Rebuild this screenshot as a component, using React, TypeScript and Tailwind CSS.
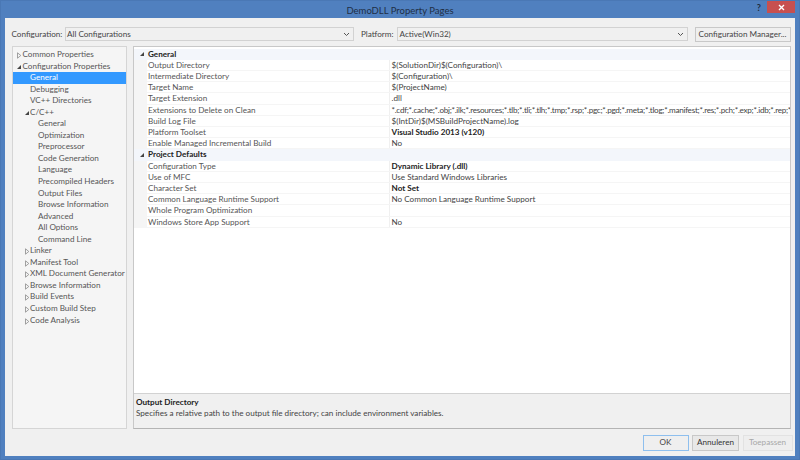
import React from "react";

function Arrow({ open }: { open: boolean }) {
  return open ? (
    <svg width="6" height="6" viewBox="0 0 6 6" className="shrink-0">
      <path d="M5 1 L5 5 L1 5 Z" fill="#444" />
    </svg>
  ) : (
    <svg width="6" height="7" viewBox="0 0 6 7" className="shrink-0">
      <path d="M1.5 0.8 L4.8 3.5 L1.5 6.2 Z" fill="none" stroke="#8a8a8a" strokeWidth="0.8" />
    </svg>
  );
}

type TreeItem = { label: string; level: number; arrow?: "open" | "closed"; selected?: boolean };

const tree: TreeItem[] = [
  { label: "Common Properties", level: 0, arrow: "closed" },
  { label: "Configuration Properties", level: 0, arrow: "open" },
  { label: "General", level: 1, selected: true },
  { label: "Debugging", level: 1 },
  { label: "VC++ Directories", level: 1 },
  { label: "C/C++", level: 1, arrow: "open" },
  { label: "General", level: 2 },
  { label: "Optimization", level: 2 },
  { label: "Preprocessor", level: 2 },
  { label: "Code Generation", level: 2 },
  { label: "Language", level: 2 },
  { label: "Precompiled Headers", level: 2 },
  { label: "Output Files", level: 2 },
  { label: "Browse Information", level: 2 },
  { label: "Advanced", level: 2 },
  { label: "All Options", level: 2 },
  { label: "Command Line", level: 2 },
  { label: "Linker", level: 1, arrow: "closed" },
  { label: "Manifest Tool", level: 1, arrow: "closed" },
  { label: "XML Document Generator", level: 1, arrow: "closed" },
  { label: "Browse Information", level: 1, arrow: "closed" },
  { label: "Build Events", level: 1, arrow: "closed" },
  { label: "Custom Build Step", level: 1, arrow: "closed" },
  { label: "Code Analysis", level: 1, arrow: "closed" },
];

type Row = { name: string; value?: string; bold?: boolean; header?: boolean; tight?: boolean };

const rows: Row[] = [
  { name: "General", header: true },
  { name: "Output Directory", value: "$(SolutionDir)$(Configuration)\\" },
  { name: "Intermediate Directory", value: "$(Configuration)\\" },
  { name: "Target Name", value: "$(ProjectName)" },
  { name: "Target Extension", value: ".dll" },
  {
    name: "Extensions to Delete on Clean",
    tight: true,
    value:
      "*.cdf;*.cache;*.obj;*.ilk;*.resources;*.tlb;*.tli;*.tlh;*.tmp;*.rsp;*.pgc;*.pgd;*.meta;*.tlog;*.manifest;*.res;*.pch;*.exp;*.idb;*.rep;*.xdc;*.pdb",
  },
  { name: "Build Log File", value: "$(IntDir)$(MSBuildProjectName).log" },
  { name: "Platform Toolset", value: "Visual Studio 2013 (v120)", bold: true },
  { name: "Enable Managed Incremental Build", value: "No" },
  { name: "Project Defaults", header: true },
  { name: "Configuration Type", value: "Dynamic Library (.dll)", bold: true },
  { name: "Use of MFC", value: "Use Standard Windows Libraries" },
  { name: "Character Set", value: "Not Set", bold: true },
  { name: "Common Language Runtime Support", value: "No Common Language Runtime Support" },
  { name: "Whole Program Optimization", value: "" },
  { name: "Windows Store App Support", value: "No" },
];

function Chevron() {
  return (
    <svg width="7" height="5" viewBox="0 0 7 5" className="shrink-0">
      <path d="M1 1 L3.5 3.5 L6 1" fill="none" stroke="#555" strokeWidth="1" />
    </svg>
  );
}

function Select({ text, className }: { text: string; className: string }) {
  return (
    <div className={`flex h-[14px] items-center justify-between border border-[#d2d2d2] bg-[#f0f0f0] pl-[1.5px] pr-[3px] text-[#444] ${className}`}>
      <span>{text}</span>
      <Chevron />
    </div>
  );
}

export default function App() {
  return (
    <div className="flex h-[460px] w-[800px] flex-col overflow-hidden border border-[#4a78b5] bg-[#5080bf] text-[8.15px] leading-[11px] text-[#444] [font-family:'Lato','Noto_Sans',sans-serif]">
      <div className="relative flex h-[17px] shrink-0 items-center justify-center text-[9.5px] text-[#1f2f45]">
        <span className="pt-[1px]">DemoDLL Property Pages</span>
        <div className="absolute right-[38px] top-[1px] text-[9px] font-bold text-[#1b2b40]">?</div>
        <div className="absolute right-[4px] top-0 flex h-[12px] w-[28px] items-center justify-center bg-[#c75050]">
          <svg width="7" height="7" viewBox="0 0 7 7">
            <path d="M1 1 L6 6 M6 1 L1 6" stroke="#fff" strokeWidth="1.4" />
          </svg>
        </div>
      </div>

      <div className="mb-[3.5px] ml-[3.5px] mr-[4.5px] flex min-h-0 flex-1 flex-col bg-[#f0f0f0] pl-[7px] pr-[4px]">
        <div className="flex h-[28px] shrink-0 items-center pt-[4px]">
          <span className="w-[53px] shrink-0 whitespace-nowrap">Configuration:</span>
          <Select text="All Configurations" className="w-[289.5px]" />
          <span className="ml-[7px] w-[36px] shrink-0 whitespace-nowrap">Platform:</span>
          <Select text="Active(Win32)" className="w-[290.5px]" />
          <div className="ml-[7px] flex h-[15px] w-[96px] items-center justify-center whitespace-nowrap border border-[#c8c8c8] bg-[#efefef]">
            Configuration Manager...
          </div>
        </div>

        <div className="flex h-[383px] shrink-0 gap-[6px]">
          <div className="w-[115.5px] shrink-0 border border-[#d5d5d5] bg-[#f5f5f5] pt-[2px] text-[#555]">
            {tree.map((t, i) => (
              <div
                key={i}
                className={`relative h-[11.56px] whitespace-nowrap leading-[11.56px] ${t.selected ? "bg-[#3399ff] text-white" : ""} ${
                  t.level === 0 ? "pl-[10px]" : t.level === 1 ? "pl-[17.5px]" : "pl-[25.5px]"
                }`}
              >
                {t.arrow && (
                  <span className={`absolute top-[3px] ${t.level === 0 ? "left-[3px]" : "left-[11px]"}`}>
                    <Arrow open={t.arrow === "open"} />
                  </span>
                )}
                {t.label}
              </div>
            ))}
          </div>

          <div className="flex min-w-0 flex-1 flex-col border border-[#c8c8c8] border-b-[#b4b4b4] bg-white">
            <div className="min-h-0 flex-1 overflow-hidden pt-[1.7px]">
              {rows.map((r, i) =>
                r.header ? (
                  <div key={i} className="flex h-[11.2px] items-center bg-[#f3f6fb] leading-[11.2px]">
                    <span className="flex w-[13px] shrink-0 justify-center pl-[2px]">
                      <Arrow open />
                    </span>
                    <span className="pl-[1px] font-bold text-[#222]">{r.name}</span>
                  </div>
                ) : (
                  <div key={i} className="flex h-[11.2px] bg-[#f5f5f5] leading-[11.2px]">
                    <div className="ml-[13px] flex min-w-0 flex-1 border-b border-[#f5f5f5] bg-white">
                      <span className="w-[243px] shrink-0 whitespace-nowrap border-r border-[#f0f0f0] pl-[1px] text-[#555]">{r.name}</span>
                      <span className={`min-w-0 flex-1 overflow-hidden whitespace-nowrap pl-[1.5px] ${r.bold ? "font-bold text-[#222]" : "text-[#444]"} ${r.tight ? "tracking-[-0.27px]" : ""}`}>{r.value}</span>
                    </div>
                  </div>
                )
              )}
            </div>
            <div className="h-[35px] shrink-0 border-t border-[#d2d2d2] bg-[#f0f0f0] px-[2px] pt-[3px] leading-[11px]">
              <div className="font-bold text-[#222]">Output Directory</div>
              <div>Specifies a relative path to the output file directory; can include environment variables.</div>
            </div>
          </div>
        </div>

        <div className="-mr-[2px] flex flex-1 items-center justify-end gap-[3.5px] pt-[1px]">
          <div className="flex h-[16px] w-[46px] items-center justify-center border border-[#8ebfee] bg-[#efefef]">OK</div>
          <div className="flex h-[16px] w-[47px] items-center justify-center border border-[#c8c8c8] bg-[#e8e8e8] text-[#333]">Annuleren</div>
          <div className="flex h-[16px] w-[50px] items-center justify-center border border-[#e2e2e2] bg-[#eeeeee] text-[#a8a8a8]">Toepassen</div>
        </div>
      </div>
    </div>
  );
}
